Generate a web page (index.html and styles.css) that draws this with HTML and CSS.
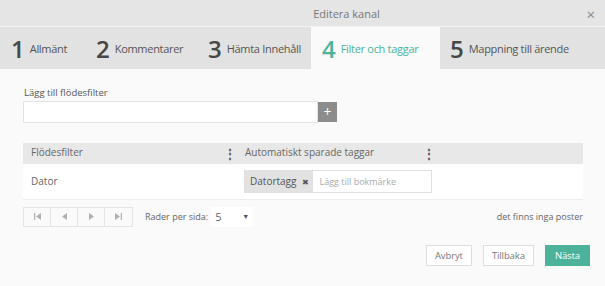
FILE: index.html
```html
<!DOCTYPE html>
<html lang="sv">
<head>
    <meta charset="UTF-8">
    <meta name="viewport" content="width=device-width, initial-scale=1.0">
    <title>Editera kanal</title>
    <link rel="stylesheet" href="styles.css">
</head>
<body>
    <div class="dialog">
        <div class="titlebar">
            <span class="title">Editera kanal</span>
            <span class="close">&times;</span>
        </div>

        <nav class="steps">
            <div class="step"><span class="num">1</span>Allmänt</div>
            <div class="step"><span class="num">2</span>Kommentarer</div>
            <div class="step"><span class="num">3</span>Hämta Innehåll</div>
            <div class="step active"><span class="num">4</span>Filter och taggar</div>
            <div class="step"><span class="num">5</span>Mappning till ärende</div>
        </nav>

        <div class="content">
            <label class="field-label" for="filter">Lägg till flödesfilter</label>
            <div class="add-row">
                <input type="text" id="filter" class="text-input">
                <button class="add-btn">+</button>
            </div>

            <table class="grid">
                <thead>
                    <tr>
                        <th class="col-filter">Flödesfilter <span class="kebab">&#8942;</span></th>
                        <th class="col-tags">Automatiskt sparade taggar <span class="kebab">&#8942;</span></th>
                        <th></th>
                    </tr>
                </thead>
                <tbody>
                    <tr>
                        <td>Dator</td>
                        <td>
                            <div class="tag-input">
                                <span class="tag">Datortagg <span class="tag-x">&#10006;</span></span>
                                <span class="placeholder">Lägg till bokmärke</span>
                            </div>
                        </td>
                        <td></td>
                    </tr>
                </tbody>
            </table>

            <div class="pager">
                <div class="pager-btns">
                    <button class="pg">
                        <svg width="7" height="7" viewBox="0 0 7 7"><rect x="0" y="0" width="1.2" height="7" fill="#b0b0b0"/><path d="M7 0 L2 3.5 L7 7 Z" fill="#b0b0b0"/></svg>
                    </button>
                    <button class="pg">
                        <svg width="5" height="7" viewBox="0 0 5 7"><path d="M5 0 L0 3.5 L5 7 Z" fill="#b0b0b0"/></svg>
                    </button>
                    <button class="pg">
                        <svg width="5" height="7" viewBox="0 0 5 7"><path d="M0 0 L5 3.5 L0 7 Z" fill="#b0b0b0"/></svg>
                    </button>
                    <button class="pg">
                        <svg width="7" height="7" viewBox="0 0 7 7"><path d="M0 0 L5 3.5 L0 7 Z" fill="#b0b0b0"/><rect x="5.8" y="0" width="1.2" height="7" fill="#b0b0b0"/></svg>
                    </button>
                </div>
                <span class="rows-label">Rader per sida:</span>
                <div class="rows-select">
                    <span>5</span>
                    <span class="caret">&#9660;</span>
                </div>
                <span class="pager-info">det finns inga poster</span>
            </div>

            <div class="actions">
                <button class="btn">Avbryt</button>
                <button class="btn">Tillbaka</button>
                <button class="btn primary">Nästa</button>
            </div>
        </div>
    </div>
</body>
</html>
```

FILE: styles.css
```css
* {
    margin: 0;
    padding: 0;
    box-sizing: border-box;
}

body {
    font-family: "Open Sans", Arial, sans-serif;
    background-color: #fafafa;
    color: #555;
}

.dialog {
    width: 605px;
    height: 286px;
    background-color: #fafafa;
}

/* Title bar */
.titlebar {
    height: 27px;
    background-color: #e5e5e5;
    border-bottom: 1px solid #f2f2f2;
    display: flex;
    align-items: center;
    justify-content: center;
    position: relative;
}

.title {
    font-size: 11px;
    color: #777;
    margin-left: 88px;
}

.close {
    position: absolute;
    right: 10px;
    top: 4px;
    font-size: 15px;
    color: #888;
}

/* Steps */
.steps {
    display: flex;
    height: 42px;
    background-color: #e2e2e2;
}

.step {
    display: flex;
    align-items: center;
    flex-shrink: 0;
    white-space: nowrap;
    font-size: 11px;
    color: #555;
    padding-left: 11px;
    letter-spacing: -0.3px;
}

.step:nth-child(1) { width: 85px; }
.step:nth-child(2) { width: 112px; }
.step:nth-child(3) { width: 114px; }
.step:nth-child(4) { width: 129px; }
.step:nth-child(5) { padding-left: 10px; }

.step .num {
    font-size: 24px;
    font-weight: 600;
    color: #474747;
    margin-right: 5px;
    letter-spacing: 0;
}

.step.active {
    background-color: #fafafa;
    color: #4cb29a;
}

.step.active .num {
    color: #4cb29a;
}

/* Content */
.content {
    padding: 17px 22px 0 23px;
}

.field-label {
    display: block;
    font-size: 9.5px;
    color: #555;
    margin-left: 1px;
    margin-bottom: 2px;
}

.add-row {
    display: flex;
    align-items: center;
}

.text-input {
    width: 295px;
    height: 22px;
    border: 1px solid #e2e2e2;
    background-color: #fff;
    outline: none;
}

.add-btn {
    width: 19px;
    height: 20px;
    background-color: #8c8c8c;
    color: #fff;
    border: none;
    font-size: 14px;
    line-height: 20px;
    font-family: "Open Sans", Arial, sans-serif;
}

/* Table */
.grid {
    width: 560px;
    border-collapse: collapse;
    margin-top: 20px;
    font-size: 10px;
}

.grid thead {
    background-color: #e8e8e8;
}

.grid th {
    height: 21px;
    font-weight: normal;
    text-align: left;
    color: #666;
    padding: 0 8px;
}

.grid th.col-filter {
    width: 214px;
    padding-right: 1px;
}

.grid th.col-tags {
    width: 199px;
    padding-right: 1px;
}

.kebab {
    float: right;
    font-size: 12px;
    color: #555;
    font-weight: bold;
}

.grid td {
    height: 35px;
    background-color: #fff;
    padding: 0 8px;
    color: #666;
    border-bottom: 1px solid #ececec;
}

.grid td:nth-child(2) {
    padding: 0 0 0 7px;
}

.tag-input {
    display: flex;
    align-items: center;
    width: 188px;
    height: 23px;
    border: 1px solid #e0e0e0;
    background-color: #fff;
}

.tag {
    display: flex;
    align-items: center;
    height: 21px;
    padding: 0 4px 0 5px;
    background-color: #e2e2e2;
    color: #555;
    font-size: 10px;
}

.tag-x {
    font-size: 8px;
    color: #555;
    margin-left: 6px;
}

.placeholder {
    font-size: 9px;
    color: #aaa;
    margin-left: 6px;
}

/* Pager */
.pager {
    display: flex;
    align-items: center;
    margin-top: 7px;
    height: 20px;
    width: 560px;
}

.pager-btns {
    display: flex;
    border: 1px solid #e4e4e4;
    height: 20px;
}

.pg {
    width: 27px;
    height: 18px;
    background-color: #fafafa;
    border: none;
    border-right: 1px solid #e4e4e4;
    display: flex;
    align-items: center;
    justify-content: center;
}

.pg:last-child {
    border-right: none;
}

.rows-label {
    font-size: 9px;
    color: #666;
    margin-left: 12px;
}

.rows-select {
    display: flex;
    align-items: center;
    justify-content: space-between;
    width: 42px;
    height: 20px;
    margin-left: 3px;
    padding: 0 4px;
    background-color: #fff;
    font-size: 11px;
    color: #666;
}

.caret {
    font-size: 7px;
    color: #555;
}

.pager-info {
    margin-left: auto;
    font-size: 9px;
    color: #666;
}

/* Actions */
.actions {
    display: flex;
    justify-content: flex-end;
    gap: 11px;
    margin-top: 18px;
    margin-right: -7px;
}

.btn {
    height: 21px;
    padding: 0 8px;
    background-color: #fff;
    border: 1px solid #dedede;
    color: #777;
    font-size: 9.5px;
    letter-spacing: -0.1px;
    font-family: "Open Sans", Arial, sans-serif;
}

.btn.primary {
    background-color: #4cb39a;
    border-color: #4cb39a;
    color: #fff;
    padding: 0 9px;
}
```
